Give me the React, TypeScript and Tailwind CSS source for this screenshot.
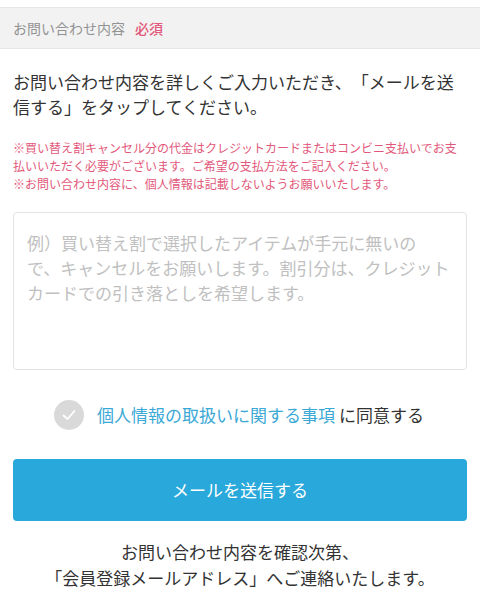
import React from "react";

const font = { fontFamily: '"Noto Sans CJK JP", "Noto Sans", sans-serif' };

export default function App() {
  return (
    <div className="w-[480px] h-[600px] bg-white overflow-hidden [text-spacing-trim:space-all]" style={font}>
      <div className="h-[7px] bg-white" />
      {/* Section header */}
      <div className="h-[42px] bg-[#f2f2f2] border-t border-b border-[#e6e6e6] flex items-center px-[13px] text-[14px] text-[#939393]">
        <span>お問い合わせ内容</span>
        <span className="ml-[10px] font-medium text-[#e2587a]">必須</span>
      </div>

      <div className="px-[13px] pt-[20px]">
        <p className="text-[17px] leading-[25px] text-[#333]">
          お問い合わせ内容を詳しくご入力いただき、「メールを送
          <br />
          信する」をタップしてください。
        </p>
        <p className="mt-[20px] text-[12px] leading-[18px] text-[#e2587a]">
          ※買い替え割キャンセル分の代金はクレジットカードまたはコンビニ支払いでお支
          <br />
          払いいただく必要がございます。ご希望の支払方法をご記入ください。
          <br />
          ※お問い合わせ内容に、個人情報は記載しないようお願いいたします。
        </p>

        {/* Textarea */}
        <div className="mt-[19px] h-[158px] rounded-[4px] border border-[#e3e3e3] px-[13px] pt-[17px]">
          <p className="text-[17px] leading-[25px] text-[#c0c0c0] whitespace-nowrap">
            例）買い替え割で選択したアイテムが手元に無いの
            <br />
            で、キャンセルをお願いします。割引分は、クレジット
            <br />
            カードでの引き落としを希望します。
          </p>
        </div>

        {/* Agreement */}
        <div className="mt-[30px] flex items-center justify-center gap-[13px] pr-[2px]">
          <div className="w-[30px] h-[30px] rounded-full bg-[#d9d9d9] flex items-center justify-center">
            <svg width="16" height="16" viewBox="0 0 16 16" fill="none">
              <path d="M2.5 8.5 L6.5 12 L13.5 4" stroke="white" strokeWidth="1.8" strokeLinecap="round" strokeLinejoin="round" />
            </svg>
          </div>
          <p className="text-[17px] leading-[24px] whitespace-nowrap">
            <span className="text-[#3aa9d6]">個人情報の取扱いに関する事項</span>
            <span className="text-[#333]"> に同意する</span>
          </p>
        </div>

        {/* Button */}
        <button className="mt-[29px] w-full h-[62px] rounded-[4px] bg-[#29a8db] text-white text-[17px]">
          メールを送信する
        </button>

        <p className="mt-[18px] text-center text-[17px] leading-[26px] text-[#333]">
          お問い合わせ内容を確認次第、
          <br />
          「会員登録メールアドレス」へご連絡いたします。
        </p>
      </div>
    </div>
  );
}
